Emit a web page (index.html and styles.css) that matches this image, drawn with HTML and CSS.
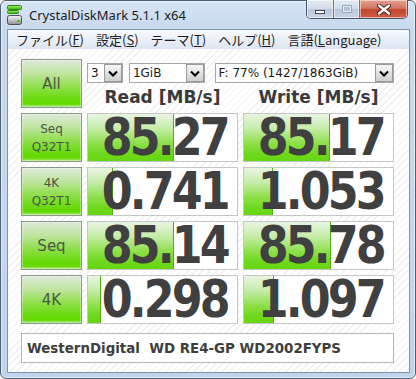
FILE: index.html
```html
<!DOCTYPE html>
<html lang="ja">
<head>
<meta charset="UTF-8">
<title>CrystalDiskMark 5.1.1 x64</title>
<link rel="stylesheet" href="styles.css">
</head>
<body>
<div class="window">
    <div class="titlebar">
        <svg class="app-icon" width="16" height="21" viewBox="0 0 16 21">
            <defs>
                <linearGradient id="gGreen" x1="0" y1="0" x2="0" y2="1">
                    <stop offset="0" stop-color="#a8f070"/>
                    <stop offset="1" stop-color="#30b400"/>
                </linearGradient>
                <linearGradient id="gDrive" x1="0" y1="0" x2="0" y2="1">
                    <stop offset="0" stop-color="#f4f4f4"/>
                    <stop offset="0.5" stop-color="#c8c8c8"/>
                    <stop offset="1" stop-color="#8c8c8c"/>
                </linearGradient>
            </defs>
            <rect x="0.5" y="0.5" width="14" height="4" rx="1" fill="url(#gGreen)" stroke="#2f8a18"/>
            <rect x="0.5" y="5.5" width="11" height="3" rx="1" fill="url(#gGreen)" stroke="#2f8a18"/>
            <rect x="0.5" y="10.5" width="14" height="9" rx="2" fill="url(#gDrive)" stroke="#505050"/>
            <rect x="10" y="15" width="3" height="2" fill="#3ccc00"/>
        </svg>
        <span class="title">CrystalDiskMark 5.1.1 x64</span>
        <div class="caption-buttons">
            <div class="cap-btn cap-min"><span class="min-glyph"></span></div>
            <div class="cap-btn cap-max"><span class="max-glyph"></span></div>
            <div class="cap-btn cap-close">
                <svg width="14" height="11" viewBox="0 0 14 11">
                    <path d="M2 1.5 L12 9.5 M12 1.5 L2 9.5" stroke="#4a1a10" stroke-width="4.2" stroke-linecap="round"/>
                    <path d="M2 1.5 L12 9.5 M12 1.5 L2 9.5" stroke="#ffffff" stroke-width="2.4" stroke-linecap="round"/>
                </svg>
            </div>
        </div>
    </div>

    <div class="client">
        <div class="menubar">
            <span class="menu-item">ファイル(<u>F</u>)</span>
            <span class="menu-item">設定(<u>S</u>)</span>
            <span class="menu-item">テーマ(<u>T</u>)</span>
            <span class="menu-item">ヘルプ(<u>H</u>)</span>
            <span class="menu-item">言語(<u>L</u>anguage)</span>
        </div>

        <div class="panel">
            <div class="grid">
                <div class="test-btn big">All</div>
                <div class="top-controls">
                    <div class="combos">
                        <div class="combo combo-count"><span class="combo-text">3</span><span class="combo-arrow"></span></div>
                        <div class="combo combo-size"><span class="combo-text">1GiB</span><span class="combo-arrow"></span></div>
                        <div class="combo combo-drive"><span class="combo-text">F: 77% (1427/1863GiB)</span><span class="combo-arrow"></span></div>
                    </div>
                    <div class="headers">
                        <div>Read [MB/s]</div>
                        <div>Write [MB/s]</div>
                    </div>
                </div>

                <div class="test-btn"><span>Seq<br>Q32T1</span></div>
                <div class="result" style="--w: 86px"><span class="num">85.27</span></div>
                <div class="result" style="--w: 86px"><span class="num">85.17</span></div>

                <div class="test-btn"><span>4K<br>Q32T1</span></div>
                <div class="result" style="--w: 25px"><span class="num">0.741</span></div>
                <div class="result" style="--w: 29px"><span class="num">1.053</span></div>

                <div class="test-btn big">Seq</div>
                <div class="result" style="--w: 86px"><span class="num">85.14</span></div>
                <div class="result" style="--w: 87px"><span class="num">85.78</span></div>

                <div class="test-btn big">4K</div>
                <div class="result" style="--w: 13px"><span class="num">0.298</span></div>
                <div class="result" style="--w: 30px"><span class="num">1.097</span></div>
            </div>

            <div class="drive-info">WesternDigital  WD RE4-GP WD2002FYPS</div>
        </div>
    </div>
</div>
</body>
</html>
```

FILE: styles.css
```css
* { box-sizing: border-box; }

body {
    margin: 0;
    width: 416px;
    height: 379px;
    overflow: hidden;
    background: #fff;
    font-family: "DejaVu Sans", sans-serif;
}

.window {
    width: 416px;
    height: 379px;
    display: flex;
    flex-direction: column;
    background: linear-gradient(to bottom, #d6e4f4 0, #c8d9ee 28px, #c0d4ec 100%);
    border: 1px solid #4e5f74;
    border-radius: 6px;
    box-shadow: inset 0 0 0 1px rgba(255,255,255,0.55);
}

/* title bar */
.titlebar {
    height: 28px;
    display: flex;
    align-items: center;
    padding-left: 6px;
}
.app-icon { flex: none; margin-top: 1px; }
.title {
    margin-left: 6px;
    font-family: "Noto Sans", sans-serif;
    font-size: 13px;
    color: #1b1b1b;
}
.caption-buttons {
    margin-left: auto;
    margin-right: 7px;
    align-self: flex-start;
    margin-top: -1px;
    height: 19px;
    display: flex;
    border: 1px solid #4a586a;
    border-top: none;
    border-radius: 0 0 5px 5px;
    overflow: hidden;
}
.cap-btn {
    height: 100%;
    display: flex;
    align-items: center;
    justify-content: center;
    box-shadow: inset 0 0 0 1px rgba(255,255,255,0.5);
}
.cap-min, .cap-max {
    width: 27px;
    background: linear-gradient(to bottom, #e4ebf4 0, #d2dcea 48%, #b9c7da 52%, #c9d6e7 100%);
    border-right: 1px solid #6a7888;
}
.cap-max { width: 26px; }
.cap-close {
    width: 47px;
    background: linear-gradient(to bottom, #e6a08f 0, #d57865 45%, #c0442b 55%, #d2604a 100%);
}
.min-glyph {
    width: 10px;
    height: 4px;
    margin-top: 6px;
    background: #fff;
    border: 1px solid #3c4654;
}
.max-glyph {
    width: 10px;
    height: 8px;
    border: 1px solid #9aa6b4;
    box-shadow: inset 0 0 0 1px #e8eef5, inset 0 2px 0 1px #b4c0ce;
}

/* client area */
.client {
    margin: 0 5px 5px 6px;
    flex: 1;
    border: 1px solid #8494a8;
    display: flex;
    flex-direction: column;
    background: #fff;
}
.menubar {
    height: 19px;
    display: flex;
    align-items: center;
    padding-left: 2px;
    background: linear-gradient(to bottom, #f7fafd 0, #e9eff7 50%, #dce5f1 100%);
    font-family: "Noto Sans CJK JP", sans-serif;
    font-size: 13px;
    color: #1e1e1e;
}
.menu-item { padding: 0 6px; line-height: 19px; }

.panel {
    flex: 1;
    padding: 10px 0 0 13px;
    background: repeating-linear-gradient(135deg, #ffffff 0 4px, #f0f0f0 4px 5px);
}

.grid {
    display: grid;
    grid-template-columns: 61px 151px 151px;
    grid-template-rows: repeat(5, 49px);
    column-gap: 5px;
    row-gap: 5px;
}

/* test buttons */
.test-btn {
    display: flex;
    align-items: center;
    justify-content: center;
    text-align: center;
    border: 1px solid #8a988a;
    background: linear-gradient(to bottom, #dde9d8 0, #bde49c 30%, #8ede48 58%, #6ada10 82%, #62d800 93%, #a6ea74 100%);
    box-shadow: inset 0 0 0 1px rgba(255,255,255,0.35);
    color: #4a5646;
    font-size: 12px;
    line-height: 18px;
}
.test-btn.big { font-size: 15px; }

.top-controls { grid-column: 2 / 4; }
.combos {
    display: flex;
    margin-top: 4px;
    height: 20px;
}
.combo {
    display: flex;
    align-items: center;
    height: 20px;
    border: 1px solid #a2a8b0;
    background: #fff;
    font-size: 12px;
    color: #1a1a1a;
}
.combo-count { width: 36px; }
.combo-size { width: 76px; margin-left: 6px; }
.combo-drive { width: 180px; margin-left: 10px; }
.combo-text { flex: 1; padding-left: 3px; white-space: nowrap; }
.combo-arrow {
    width: 18px;
    height: 18px;
    border: 1px solid #9a9a9a;
    background:
        url("data:image/svg+xml,%3Csvg xmlns='http://www.w3.org/2000/svg' width='10' height='7'%3E%3Cpath d='M1 1.5 L5 5.5 L9 1.5' fill='none' stroke='%23000' stroke-width='2'/%3E%3C/svg%3E") center no-repeat,
        linear-gradient(to bottom, #f6f6f6, #e2e2e2 50%, #cfcfcf);
}

.headers {
    display: grid;
    grid-template-columns: 151px 151px;
    column-gap: 5px;
    margin-top: 4px;
    font-weight: bold;
    font-size: 17px;
    line-height: 20px;
    color: #3a3a3a;
    text-align: center;
}

/* result cells */
.result {
    display: flex;
    align-items: center;
    justify-content: flex-end;
    padding-right: 9px;
    border: 1px solid #c6c6c6;
    background:
        linear-gradient(#4fb010, #4fb010) no-repeat calc(var(--w) - 1px) 0 / 1px 100%,
        linear-gradient(to bottom, #e8f5e2 0, #c4eca6 32%, #8ee04a 62%, #6ed81c 85%, #66d612 100%) no-repeat 0 0 / var(--w) 100%,
        #fff;
}
.num {
    display: inline-block;
    font-weight: bold;
    font-size: 51px;
    line-height: 51px;
    letter-spacing: -3.3px;
    color: #404040;
    transform: scaleX(0.87);
    transform-origin: right center;
}

.drive-info {
    margin-top: 9px;
    width: 373px;
    height: 30px;
    display: flex;
    align-items: center;
    padding-left: 5px;
    border: 1px solid #b4b4b4;
    background: #fff;
    white-space: pre;
    font-weight: bold;
    font-size: 13.4px;
    color: #3e3e3e;
}
```
